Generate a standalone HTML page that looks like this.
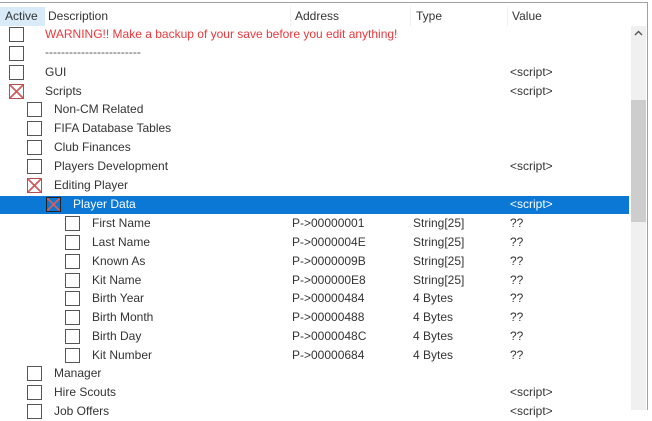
<!DOCTYPE html>
<html><head><style>
body{margin:0;width:652px;height:410px;overflow:hidden;background:#fff;font-family:"Liberation Sans",sans-serif;font-size:12px;color:#333;position:relative}
.a{position:absolute;white-space:nowrap}
.t{position:absolute;line-height:19px;white-space:nowrap;margin-top:1px}
.cb{position:absolute;width:15px;height:15px;border:1px solid #555;background:#fff;box-sizing:border-box}
.x{border-color:#b45050;background:linear-gradient(45deg,transparent 46%,#d06060 46%,#d06060 54%,transparent 54%),linear-gradient(-45deg,transparent 46%,#d06060 46%,#d06060 54%,transparent 54%),#fff}
</style></head><body>
<div class="a" style="left:0;top:2px;width:648px;height:1px;background:#a0a0a0"></div>
<div class="a" style="left:647px;top:2px;width:1px;height:408px;background:#a0a0a0"></div>
<div class="a" style="left:0;top:7px;width:45px;height:19px;background:#d9ebf9"></div>
<div class="t" style="left:5px;top:6px">Active</div>
<div class="t" style="left:48px;top:6px">Description</div>
<div class="t" style="left:295px;top:6px">Address</div>
<div class="t" style="left:416px;top:6px">Type</div>
<div class="t" style="left:512px;top:6px">Value</div>
<div class="a" style="left:290px;top:7px;width:1px;height:19px;background:#f0f0f0"></div>
<div class="a" style="left:410px;top:7px;width:1px;height:19px;background:#f0f0f0"></div>
<div class="a" style="left:507px;top:7px;width:1px;height:19px;background:#f0f0f0"></div>
<div class="a" style="left:631px;top:26px;width:15px;height:384px;background:#f0f0f0"></div>
<div class="a" style="left:631px;top:100px;width:15px;height:122px;background:#cdcdcd"></div>
<svg class="a" style="left:634px;top:30px" width="9" height="6"><path d="M1 5 L4.5 1.5 L8 5" stroke="#555" stroke-width="1.4" fill="none"/></svg>
<div class="a" style="left:0;top:196px;width:629px;height:18px;background:#0a78d4"></div>

<div class="cb" style="left:9px;top:27px"></div><div class="t" style="left:45px;top:24px;color:#e8383d">WARNING!! Make a backup of your save before you edit anything!</div>
<div class="cb" style="left:9px;top:46px"></div><div class="t" style="left:45px;top:42px;color:#555">------------------------</div>
<div class="cb" style="left:9px;top:65px"></div><div class="t" style="left:45px;top:62px">GUI</div><div class="t" style="left:510px;top:62px">&lt;script&gt;</div>
<div class="cb x" style="left:9px;top:84px"></div><div class="t" style="left:45px;top:81px">Scripts</div><div class="t" style="left:510px;top:81px">&lt;script&gt;</div>
<div class="cb" style="left:27px;top:102px"></div><div class="t" style="left:54px;top:99px">Non-CM Related</div>
<div class="cb" style="left:27px;top:121px"></div><div class="t" style="left:54px;top:118px">FIFA Database Tables</div>
<div class="cb" style="left:27px;top:140px"></div><div class="t" style="left:54px;top:137px">Club Finances</div>
<div class="cb" style="left:27px;top:159px"></div><div class="t" style="left:54px;top:156px">Players Development</div><div class="t" style="left:510px;top:156px">&lt;script&gt;</div>
<div class="cb x" style="left:27px;top:178px"></div><div class="t" style="left:54px;top:175px">Editing Player</div>
<div class="cb x" style="left:46px;top:197px;background-color:#0a78d4;border-color:#222"></div><div class="t" style="left:73px;top:194px;color:#fff">Player Data</div><div class="t" style="left:510px;top:194px;color:#fff">&lt;script&gt;</div>

<div class="cb" style="left:65px;top:216px"></div><div class="t" style="left:92px;top:213px">First Name</div><div class="t" style="left:292px;top:213px">P-&gt;00000001</div><div class="t" style="left:413px;top:213px">String[25]</div><div class="t" style="left:510px;top:213px">??</div>
<div class="cb" style="left:65px;top:235px"></div><div class="t" style="left:92px;top:232px">Last Name</div><div class="t" style="left:292px;top:232px">P-&gt;0000004E</div><div class="t" style="left:413px;top:232px">String[25]</div><div class="t" style="left:510px;top:232px">??</div>
<div class="cb" style="left:65px;top:254px"></div><div class="t" style="left:92px;top:251px">Known As</div><div class="t" style="left:292px;top:251px">P-&gt;0000009B</div><div class="t" style="left:413px;top:251px">String[25]</div><div class="t" style="left:510px;top:251px">??</div>
<div class="cb" style="left:65px;top:273px"></div><div class="t" style="left:92px;top:270px">Kit Name</div><div class="t" style="left:292px;top:270px">P-&gt;000000E8</div><div class="t" style="left:413px;top:270px">String[25]</div><div class="t" style="left:510px;top:270px">??</div>
<div class="cb" style="left:65px;top:291px"></div><div class="t" style="left:92px;top:288px">Birth Year</div><div class="t" style="left:292px;top:288px">P-&gt;00000484</div><div class="t" style="left:413px;top:288px">4 Bytes</div><div class="t" style="left:510px;top:288px">??</div>
<div class="cb" style="left:65px;top:310px"></div><div class="t" style="left:92px;top:307px">Birth Month</div><div class="t" style="left:292px;top:307px">P-&gt;00000488</div><div class="t" style="left:413px;top:307px">4 Bytes</div><div class="t" style="left:510px;top:307px">??</div>
<div class="cb" style="left:65px;top:329px"></div><div class="t" style="left:92px;top:326px">Birth Day</div><div class="t" style="left:292px;top:326px">P-&gt;0000048C</div><div class="t" style="left:413px;top:326px">4 Bytes</div><div class="t" style="left:510px;top:326px">??</div>
<div class="cb" style="left:65px;top:348px"></div><div class="t" style="left:92px;top:345px">Kit Number</div><div class="t" style="left:292px;top:345px">P-&gt;00000684</div><div class="t" style="left:413px;top:345px">4 Bytes</div><div class="t" style="left:510px;top:345px">??</div>
<div class="cb" style="left:27px;top:366px"></div><div class="t" style="left:54px;top:363px">Manager</div>
<div class="cb" style="left:27px;top:385px"></div><div class="t" style="left:54px;top:382px">Hire Scouts</div><div class="t" style="left:510px;top:382px">&lt;script&gt;</div>
<div class="cb" style="left:27px;top:404px"></div><div class="t" style="left:54px;top:401px">Job Offers</div><div class="t" style="left:510px;top:401px">&lt;script&gt;</div>
</body></html>
